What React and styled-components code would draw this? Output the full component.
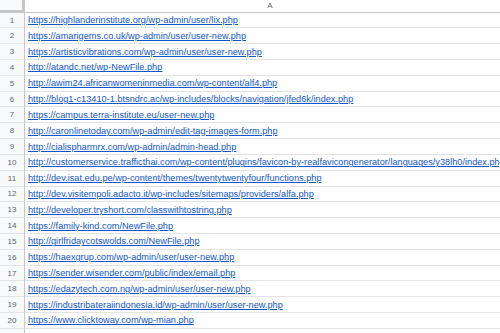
import React from "react";
import styled, { createGlobalStyle } from "styled-components";

const Global = createGlobalStyle`
  html, body { margin: 0; padding: 0; background: #fff; overflow: hidden; }
  body { font-family: Arial, "Liberation Sans", sans-serif; }
`;

const urls = [
  "https://highlanderinstitute.org/wp-admin/user/lix.php",
  "https://amarigems.co.uk/wp-admin/user/user-new.php",
  "https://artisticvibrations.com/wp-admin/user/user-new.php",
  "http://atandc.net/wp-NewFile.php",
  "http://awim24.africanwomeninmedia.com/wp-content/alf4.php",
  "http://blog1-c13410-1.btsndrc.ac/wp-includes/blocks/navigation/jfed6k/index.php",
  "https://campus.terra-institute.eu/user-new.php",
  "http://caronlinetoday.com/wp-admin/edit-tag-images-form.php",
  "http://cialispharmrx.com/wp-admin/admin-head.php",
  "http://customerservice.trafficthai.com/wp-content/plugins/favicon-by-realfavicongenerator/languages/y38lh0/index.php",
  "http://dev.isat.edu.pe/wp-content/themes/twentytwentyfour/functions.php",
  "http://dev.visitempoli.adacto.it/wp-includes/sitemaps/providers/alfa.php",
  "http://developer.tryshort.com/classwithtostring.php",
  "https://family-kind.com/NewFile.php",
  "http://girlfridaycotswolds.com/NewFile.php",
  "https://haexgrup.com/wp-admin/user/user-new.php",
  "https://sender.wisender.com/public/index/email.php",
  "https://edazytech.com.ng/wp-admin/user/user-new.php",
  "https://industribateraiindonesia.id/wp-admin/user/user-new.php",
  "https://www.clicktoway.com/wp-mian.php",
  "",
];

const Sheet = styled.div`
  display: grid;
  grid-template-columns: 25px 490px;
  grid-template-rows: 12.6px;
  grid-auto-rows: 15.82px;
  width: 500px;
  height: 333px;
  overflow: hidden;
`;

const Corner = styled.div`
  background: #f8f9fa;
  border-right: 3px solid #c6c6c6;
  border-bottom: 3px solid #c6c6c6;
  box-sizing: border-box;
`;

const ColHeader = styled.div`
  background: #fff;
  border-bottom: 1px solid #c6c6c6;
  box-sizing: border-box;
  font-size: 8px;
  color: #5f6368;
  display: flex;
  align-items: center;
  justify-content: center;
`;

const RowNum = styled.div`
  background: #f8f9fa;
  border-right: 1px solid #c6c6c6;
  border-bottom: 1px solid #e2e3e3;
  box-sizing: border-box;
  font-size: 8px;
  color: #5f6368;
  display: flex;
  align-items: center;
  justify-content: center;
`;

const Cell = styled.div`
  border-bottom: 1px solid #e2e3e3;
  box-sizing: border-box;
  display: flex;
  align-items: center;
  padding-left: 3px;
  white-space: nowrap;
  overflow: visible;
`;

const Link = styled.a`
  font-size: 9.2px;
  color: #1155cc;
  text-decoration: underline;
  font-family: Arial, "Liberation Sans", sans-serif;
`;

export default function App() {
  return (
    <>
      <Global />
      <Sheet>
        <Corner />
        <ColHeader>A</ColHeader>
        {urls.map((u, i) => (
          <React.Fragment key={i}>
            <RowNum>{i + 1}</RowNum>
            <Cell>{u && <Link href="#">{u}</Link>}</Cell>
          </React.Fragment>
        ))}
      </Sheet>
    </>
  );
}
